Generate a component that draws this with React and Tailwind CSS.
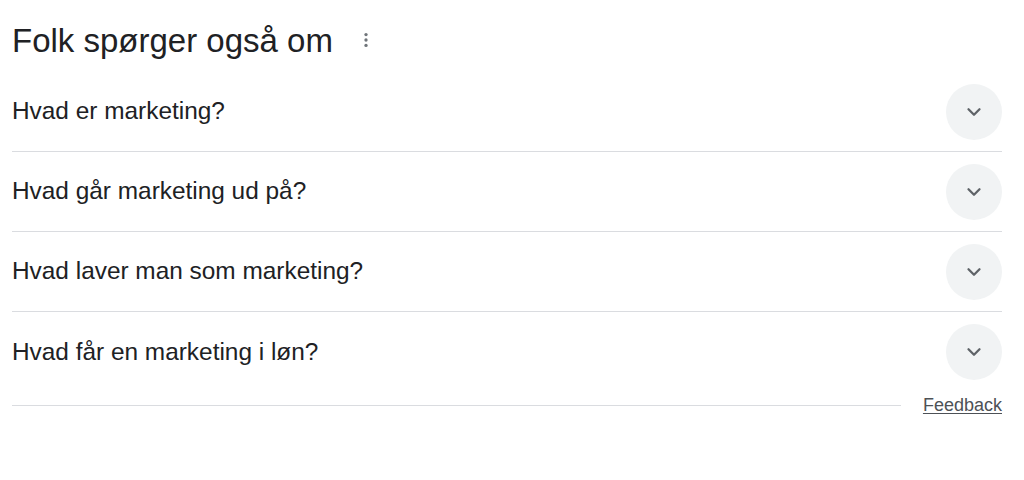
import { ChevronDown } from "lucide-react";

const QUESTIONS = [
  "Hvad er marketing?",
  "Hvad går marketing ud på?",
  "Hvad laver man som marketing?",
  "Hvad får en marketing i løn?",
];

function MoreIcon() {
  return (
    <svg width="20" height="20" viewBox="0 0 24 24" className="text-[#70757a]">
      <circle cx="12" cy="5.5" r="2" fill="currentColor" />
      <circle cx="12" cy="12" r="2" fill="currentColor" />
      <circle cx="12" cy="18.5" r="2" fill="currentColor" />
    </svg>
  );
}

export default function App() {
  return (
    <div className="w-[1024px] h-[480px] bg-white font-['Liberation_Sans',Arial,sans-serif] text-[#202124]">
      <div className="pl-3 pr-[22px] pt-[20px]">
        <div className="flex items-center gap-[23px] h-[40px]">
          <h2 className="text-[33px] leading-none">Folk spørger også om</h2>
          <MoreIcon />
        </div>

        <div className="mt-[12px]">
          {QUESTIONS.map((q, i) => (
            <div
              key={i}
              className={`flex items-center justify-between h-[80px] ${i < QUESTIONS.length - 1 ? "border-b border-[#dadce0]" : ""}`}
            >
              <span className="text-[24.4px]">{q}</span>
              <div className="w-[56px] h-[56px] rounded-full bg-[#f1f3f4] flex items-center justify-center">
                <ChevronDown size={22} strokeWidth={2.5} className="text-[#5f6368]" />
              </div>
            </div>
          ))}
        </div>

        <div className="flex items-center gap-[22px]">
          <div className="flex-1 border-t border-[#dadce0]" />
          <span className="text-[18px] text-[#4d5156] underline underline-offset-2">Feedback</span>
        </div>
      </div>
    </div>
  );
}
